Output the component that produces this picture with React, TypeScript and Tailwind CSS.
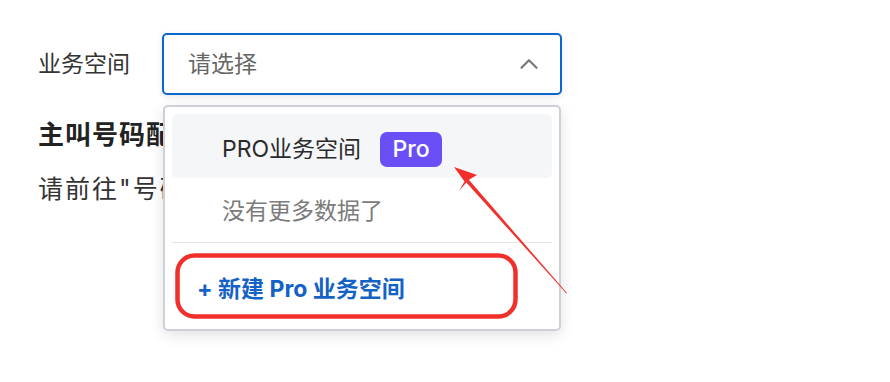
import { ChevronUp } from "lucide-react";

const font = { fontFamily: 'Inter, "Noto Sans CJK SC", sans-serif' };

function Dropdown() {
  return (
    <div className="absolute left-[163px] top-[105px] w-[398px] h-[226px] rounded-[5px] border-2 border-[#cdd1d7] bg-white shadow-[0_4px_14px_rgba(0,0,0,0.12)] p-[7px] flex flex-col">
      <div className="h-[64px] shrink-0 rounded-[5px] bg-[#f5f6f8] flex items-center pl-[50px] pt-[7px] gap-[19px]">
        <span className="text-[23px] text-[#2b2b2b]">PRO业务空间</span>
        <span className="h-[35px] w-[62px] rounded-[7px] bg-[#6a4ff6] text-white text-[23px] font-medium flex items-center justify-center">
          Pro
        </span>
      </div>
      <div className="h-[64px] shrink-0 flex items-center pl-[50px] pt-[3px]">
        <span className="text-[23px] text-[#7b7b7b]">没有更多数据了</span>
      </div>
      <div className="h-px bg-[#e3e4e6] shrink-0" />
      <div className="flex-1 flex items-center pl-[25px] pt-[14px]">
        <span className="text-[23px] font-bold text-[#1462c6]">+ 新建 Pro 业务空间</span>
      </div>
    </div>
  );
}

function Annotations() {
  return (
    <svg className="absolute inset-0 pointer-events-none" width="890" height="382" viewBox="0 0 890 382">
      <rect x="177.5" y="255.5" width="338" height="61" rx="17" fill="none" stroke="#f1302b" strokeWidth="4.5" />
      <polygon points="567,293 566.4,293.4 465.4,181.5 468.2,179" fill="#f1302b" />
      <polygon points="454,167 477,175 468.5,180 459,191 464.5,181.5" fill="#f1302b" />
    </svg>
  );
}

export default function App() {
  return (
    <div className="relative w-[890px] h-[382px] bg-white overflow-hidden" style={font}>
      <div className="pl-[38px] pt-[33px]">
        <div className="flex items-center">
          <span className="w-[124px] text-[23px] text-[#333]">业务空间</span>
          <div className="w-[400px] h-[62px] rounded-[5px] border-2 border-[#0b66cf] bg-white shadow-[0_2px_6px_rgba(0,0,0,0.1)] flex items-center justify-between pl-[24px] pr-[16px]">
            <span className="text-[23px] text-[#666]">请选择</span>
            <ChevronUp size={30} strokeWidth={1.8} className="text-[#7a7a7a]" />
          </div>
        </div>
        <h2 className="mt-[22px] text-[26px] leading-[36px] font-bold text-[#222] tracking-[1px]">主叫号码配置</h2>
        <p className="mt-[18px] text-[25px] leading-[36px] text-[#333] tracking-[2px]">请前往"号码管理"页面进行配置</p>
      </div>
      <Dropdown />
      <Annotations />
    </div>
  );
}
